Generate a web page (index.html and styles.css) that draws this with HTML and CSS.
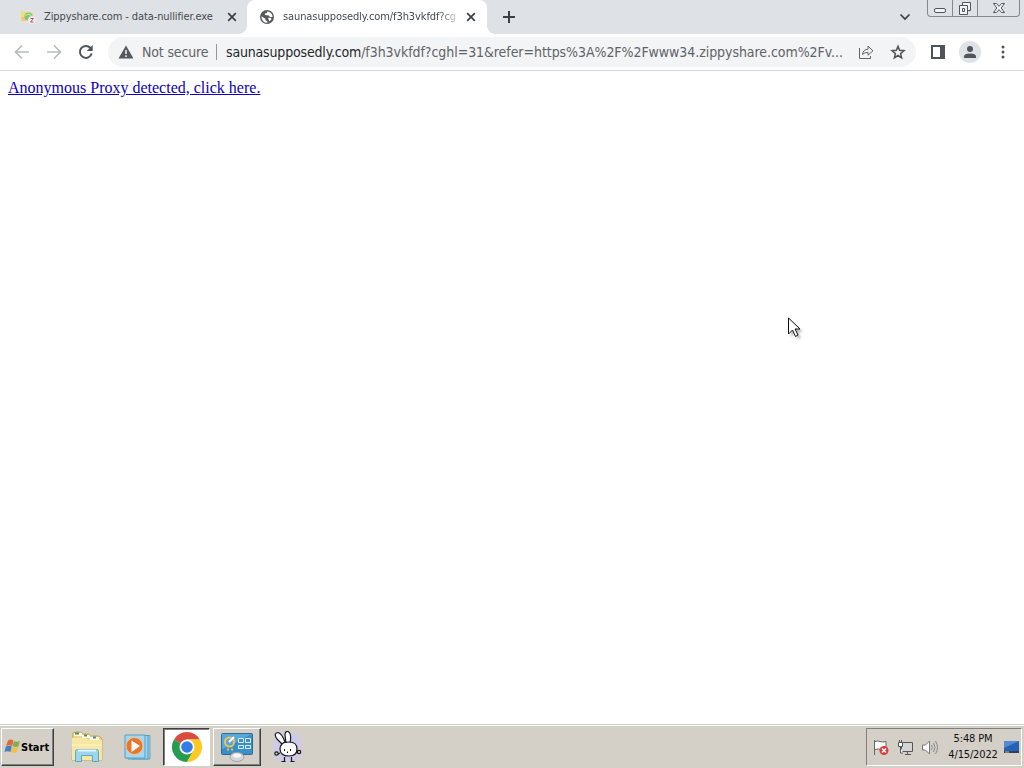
FILE: index.html
```html
<!DOCTYPE html>
<html lang="en">
<head>
    <meta charset="UTF-8">
    <title>saunasupposedly.com</title>
    <link rel="stylesheet" href="styles.css">
</head>
<body>
    <div class="tab-strip">
        <div class="tab">
            <svg class="favicon" width="16" height="16" viewBox="0 0 16 16">
                <path d="M1 2l6 .5 1 1 5-.5v7l-12 2z" fill="#f3de7c"/>
                <path d="M1 8h5v4H2z" fill="#f7c56e"/>
                <circle cx="8.5" cy="7.5" r="4" fill="#7fc777"/>
                <path d="M5.500 6.500q4-3 6 1" stroke="#d6f0bd" fill="none"/>
                <circle cx="11.800" cy="11" r="3.700" fill="#f8eded"/>
                <path d="M10.500 9.500h3l-3 3.500h3" stroke="#a65260" fill="none"/>
            </svg>
            <span class="tab-title">Zippyshare.com - data-nullifier.exe</span>
            <svg class="tab-close" width="10" height="10" viewBox="0 0 10 10"><path d="M1.200 1.200l7.600 7.600M8.800 1.200L1.200 8.800"/></svg>
        </div>
        <div class="tab active">
            <svg class="favicon" width="16" height="16" viewBox="0 0 16 16">
                <circle cx="8" cy="8" r="7" fill="#55595e"/>
                <path d="M2.300 7.200l4.100 2.500v1.500l2 1v1.600Q3 14 2.300 7.200zM8.500 2.300l-.6 1.600-2 .6v1.600l4 .3 1 1.500 2.700.2Q13.700 4 8.500 2.300zM9 8.700h2.500l1.300 1.300-2.500 2.500z" fill="#fff"/>
            </svg>
            <span class="tab-title faded">saunasupposedly.com/f3h3vkfdf?cg</span>
            <svg class="tab-close" width="10" height="10" viewBox="0 0 10 10"><path d="M1.200 1.200l7.600 7.600M8.800 1.200L1.200 8.800"/></svg>
        </div>
        <svg class="new-tab" width="12" height="12" viewBox="0 0 12 12"><path d="M6 0v12M0 6h12"/></svg>
        <svg class="tab-search" width="12" height="8" viewBox="0 0 12 8"><path d="M1.500 1.500L6 6l4.500-4.500"/></svg>
        <div class="window-buttons">
            <div class="win-min"><svg width="14" height="16" viewBox="0 0 14 16"><rect x="1.500" y="8.500" width="11" height="4" rx="1.500"/></svg></div>
            <div class="win-max"><svg width="14" height="16" viewBox="0 0 14 16"><path d="M4.500 5.500v-3h8v8h-3M1.500 5.500h8v9h-8zM4.500 8.500h2v3h-2z"/></svg></div>
            <div class="win-close"><svg width="14" height="16" viewBox="0 0 14 16"><path d="M1.500 3.500h3L7 6.300l2.500-2.800h3L9.200 8l3.300 4.500h-3L7 9.700l-2.500 2.800h-3L4.800 8z"/></svg></div>
        </div>
    </div>

    <div class="toolbar">
        <svg class="nav" width="16" height="16" viewBox="0 0 16 16"><path d="M15 8H2M8 1.500L1.500 8 8 14.500"/></svg>
        <svg class="nav" width="16" height="16" viewBox="0 0 16 16"><path d="M1 8h13M8 1.500L14.500 8 8 14.500"/></svg>
        <svg class="nav reload" width="16" height="16" viewBox="0 0 16 16"><path d="M13.700 9.500A6 6 0 1 1 12.500 4"/><path class="tip" d="M14.700 1v6h-6z"/></svg>
        <div class="address-bar">
            <svg class="warning" width="16" height="14" viewBox="0 0 16 14"><path d="M8 .5L15.500 13.500H.5z" fill="#55595d"/><path d="M8 5v4M8 10.200v1.800" stroke="#f1f3f4" stroke-width="1.500"/></svg>
            <span class="not-secure">Not secure</span>
            <span class="divider"></span>
            <span class="url"><span class="host">saunasupposedly.com</span><span class="path">/f3h3vkfdf?cghl=31&amp;refer=https%3A%2F%2Fwww34.zippyshare.com%2Fv...</span></span>
            <svg class="share" width="16" height="16" viewBox="0 0 16 16"><path d="M1.500 4v10.500h11V12M4.500 10.500Q5 5.500 10 5.200V2.200l5 4.600-5 4.400V8.300Q6.500 8.300 4.500 10.500z"/></svg>
            <svg class="star" width="16" height="16" viewBox="0 0 16 16"><path d="M8 2.300l1.600 4 4.400.4-3.400 2.900 1 4.200L8 11.500l-3.600 2.300 1-4.200L2 6.700l4.400-.4z"/></svg>
        </div>
        <svg class="side-panel" width="14" height="14" viewBox="0 0 14 14"><path d="M0 0h14v14H0zM2 2v10h7V2z" fill="#505458" fill-rule="evenodd"/></svg>
        <svg class="avatar" width="22" height="22" viewBox="0 0 22 22"><circle cx="11" cy="11" r="11" fill="#dfe2e6"/><circle cx="11" cy="8" r="3" fill="#50565b"/><path d="M5 17v-1.500q0-3 6-3t6 3V17z" fill="#50565b"/></svg>
        <svg class="menu" width="4" height="14" viewBox="0 0 4 14"><circle cx="2" cy="2" r="1.500"/><circle cx="2" cy="7" r="1.500"/><circle cx="2" cy="12" r="1.500"/></svg>
    </div>

    <div class="page">
        <a href="#">Anonymous Proxy detected, click here.</a>
    </div>

    <div class="taskbar">
        <div class="start">
            <svg width="17" height="18" viewBox="0 0 17 18">
                <path d="M4 2.500q3-2 5.500 0L8 8Q5 6.500 2 8z" fill="#e3663c"/>
                <path d="M10 3q3 1.500 6 0l-1.700 5.500q-3 1-5.800-.5z" fill="#80b04b"/>
                <path d="M1.800 8.500q3-1.500 6 0L6.500 14Q3.500 12.500.5 14z" fill="#4280c8"/>
                <path d="M8.300 9q3 1.500 6 0l-1.500 5.500q-3 1-6-.5z" fill="#efc145"/>
            </svg>
            <span>Start</span>
        </div>
        <svg class="explorer" width="34" height="34" viewBox="0 0 34 34">
            <path d="M3 3l2-1h6l2 2h6l2 2h8l3 3v21H2z" fill="#edd88a" stroke="#c9a746"/>
            <path d="M4 3h8v3H4zM12 5h8v3h-8zM20 7h9v3h-9z" fill="#fffdf0"/>
            <path d="M5 3.500h4" stroke="#48933f" stroke-width="2"/><path d="M14 5.500h3" stroke="#598c55" stroke-width="2"/><path d="M23 7.500h3" stroke="#557cac" stroke-width="2"/>
            <path d="M2 8h13l3 2h14v20H2z" fill="#f6e8a4"/>
            <path d="M2 15h30" stroke="#fff6c6"/>
            <path d="M5.500 31.500v-10q0-2 2-2h19q2 0 2 2v10h-6v-6h-11v6z" fill="#9dd5ec" stroke="#5ba7ca"/>
            <path d="M8 20.500h18" stroke="#e2f6fc" stroke-width="2"/>
        </svg>
        <svg class="media" width="28" height="28" viewBox="0 0 28 28">
            <path d="M8 3l18-.5V26H8z" fill="#a3cce3" stroke="#6ba5c8"/>
            <path d="M4 2.500h20V26H4z" fill="#a0d4ee" stroke="#4e9ac3"/>
            <path d="M1 2h20v23H1z" fill="#a5d7ee" stroke="#559fc8"/>
            <circle cx="10.500" cy="13" r="8.500" fill="#e8772d" stroke="#f6c489"/>
            <path d="M7.500 7.500l8.500 5.500-8.500 6z" fill="#fff"/>
        </svg>
        <div class="task chrome-task">
            <svg width="32" height="32" viewBox="0 0 32 32">
                <path d="M16 16L3 8.500A15 15 0 0 1 29 8.500H16z" fill="#d94c3e"/>
                <path d="M16 16L3 8.500A15 15 0 0 0 16 31l6.500-11.200z" fill="#279b51"/>
                <path d="M16 8.500h13A15 15 0 0 1 16 31l6.500-11.200z" fill="#fbc91f"/>
                <circle cx="16" cy="16" r="7.500" fill="#fff"/><circle cx="16" cy="16" r="5.800" fill="#327ce3"/>
            </svg>
        </div>
        <div class="task panel-task">
            <svg width="34" height="32" viewBox="0 0 34 32">
                <rect x="1.500" y="2.500" width="31" height="21" rx="1" fill="#3b8fc7" stroke="#2a6b9c"/>
                <path d="M2 3h30L2 18z" fill="#59a8d6"/>
                <circle cx="9.500" cy="11" r="4.500" fill="none" stroke="#edc35e" stroke-width="2"/>
                <path d="M9 11l5-5" stroke="#fff" stroke-width="2"/>
                <path d="M18.500 7.500h5v4h-5zM25.500 7.500h5v4h-5zM18.500 14.500h5v3h-5zM25.500 14.500h5v3h-5z" fill="#458fc4" stroke="#d7effa"/>
                <path d="M7 18.500h2m2 0h2" stroke="#f2bd4f" stroke-width="2"/>
                <ellipse cx="17" cy="26" rx="7" ry="4.500" fill="#d4d7d9" stroke="#9ca3a9"/><ellipse cx="17" cy="24.500" rx="4" ry="2" fill="#f6f6f6"/>
            </svg>
        </div>
        <svg class="bunny" width="32" height="32" viewBox="0 0 32 32">
            <rect class="glow" x="2" y="2" width="27" height="28" rx="9"/>
            <g fill="#fff" stroke="#17171c" stroke-width="1.200">
                <path d="M12.500 26v4M19.500 26v4M9.500 30.500h4M18.500 30.500h4"/>
                <path d="M10 13L5 8Q1 2 6 1.500q4 1 7 9.500zM14 12l-1-8q0-4 3-3.500 4 2 2 11.500z"/>
                <path d="M10 13q2-2 7-2 8 0 8 7 0 7-8 7-9 0-9-7 0-3 2-5z"/>
                <path d="M8 22l-2 1M24 22l2-1" fill="none"/>
                <circle cx="4.500" cy="22.500" r="1.700" fill="#dbdba0"/><circle cx="27" cy="21" r="1.700" fill="#dbdba0"/>
            </g>
            <path d="M12.500 18v2M18.500 18v2M15.500 20.500v1.500" fill="none" stroke="#17171c"/>
        </svg>
        <div class="tray">
            <svg class="flag" width="17" height="17" viewBox="0 0 17 17"><path d="M1.500 1v15M2 2.500q3-1 5 0t6 0v8q-3 1-5 0t-6 0" fill="#fafafa" stroke="#65686b"/><circle cx="11" cy="11.500" r="4.500" fill="#d83e42"/><path d="M9 9.500l4 4m0-4l-4 4" stroke="#fff" stroke-width="1.500"/></svg>
            <svg class="network" width="17" height="17" viewBox="0 0 17 17"><path d="M4.500 3.500h11v9h-11zM8 15.500h6M10.500 13v2" fill="#d5d5d2" stroke="#55585b"/><path d="M1.500 3.500h4v4h-4zM2.500 1v2M4.500 1v2M3.500 8v6H6" fill="#fff" stroke="#55585b"/></svg>
            <svg class="volume" width="17" height="17" viewBox="0 0 17 17"><path d="M1.500 6h3l4-4v13l-4-4h-3z" fill="#fff" stroke="#777"/><path d="M10.500 6q1.500 2.500 0 5M12.500 4q3 4.500 0 9M14.500 2q4 6.500 0 13" fill="none" stroke="#898989"/></svg>
            <div class="clock"><div class="time">5:48 PM</div><div class="date">4/15/2022</div></div>
            <svg class="desktop" width="15" height="14" viewBox="0 0 15 14"><path d="M0 1h15v10H0z" fill="#2462b5"/><path d="M0 1h15L0 8z" fill="#528bd2"/><path d="M0 11h15v2H0z" fill="#323f57"/><path d="M1 12h4" stroke="#a8d2a0"/></svg>
        </div>
    </div>

    <svg class="cursor" width="18" height="25" viewBox="0 0 18 25"><path class="shadow" d="M3 4v16l4-4 3 6 3-1-3-6h5z"/><path d="M.5 1v16l4-4 3 6.500 2.500-1.500-3-6H12z" fill="#fff" stroke="#111"/></svg>
</body>
</html>
```

FILE: styles.css
```css
* {
    box-sizing: border-box;
}

body {
    margin: 0;
    height: 768px;
    display: flex;
    flex-direction: column;
    overflow: hidden;
    background: #fff;
    font-family: "DejaVu Sans Condensed", "DejaVu Sans", sans-serif;
    font-stretch: condensed;
}

svg {
    display: block;
    flex: none;
}

.tab-strip {
    height: 34px;
    flex: none;
    display: flex;
    align-items: flex-start;
    background: #dee1e6;
}

.tab {
    width: 247px;
    height: 34px;
    padding-left: 20px;
    display: flex;
    align-items: center;
    flex: none;
}

.tab.active {
    position: relative;
    width: 240px;
    padding-left: 12px;
    background: #fff;
    border-radius: 8px 8px 0 0;
}

/* curved feet of the active tab */
.tab.active::before,
.tab.active::after {
    content: "";
    position: absolute;
    bottom: 0;
    width: 8px;
    height: 8px;
}

.tab.active::before {
    left: -8px;
    background: radial-gradient(circle at 0 0, transparent 7.5px, #fff 8px);
}

.tab.active::after {
    right: -8px;
    background: radial-gradient(circle at 100% 0, transparent 7.5px, #fff 8px);
}

.tab-title {
    width: 174px;
    margin-left: 8px;
    white-space: nowrap;
    font-size: 11px;
    line-height: 16px;
    letter-spacing: -0.1px;
    color: #45494d;
}

.faded {
    mask-image: linear-gradient(90deg, #000 155px, transparent 180px);
}

.tab-close {
    margin-left: 9px;
}

.tab-close path,
.new-tab path,
.tab-search path {
    fill: none;
    stroke: #3c4043;
    stroke-width: 1.7;
}

.new-tab {
    margin: 11px 0 0 16px;
}

.new-tab path {
    stroke-width: 2;
}

.tab-search {
    margin: 13px 14px 0 auto;
    padding-right: 0;
    position: relative;
}

.window-buttons {
    width: 93px;
    height: 17px;
    margin: 0 4px 0 2px;
    display: flex;
    border: 1px solid #85898f;
    border-top: 0;
    border-radius: 0 0 4px 4px;
}

.window-buttons div {
    display: flex;
    justify-content: center;
    border-right: 1px solid #85898f;
}

.window-buttons svg {
    fill: #f2f3f5;
    stroke: #51565d;
}

.win-min {
    width: 25px;
}

.win-max {
    width: 25px;
}

.window-buttons .win-close {
    flex: 1;
    border: 0;
}

.toolbar {
    height: 37px;
    flex: none;
    padding-left: 14px;
    display: flex;
    align-items: center;
    border-bottom: 1px solid #d7d9dc;
}

.nav {
    margin-right: 16px;
    fill: none;
    stroke: #b9bbbd;
    stroke-width: 1.7;
}

.reload {
    margin-right: 14px;
    stroke: #505458;
    stroke-width: 2;
}

.reload .tip {
    fill: #505458;
    stroke: none;
}

.address-bar {
    width: 808px;
    height: 30px;
    padding-left: 10px;
    display: flex;
    align-items: center;
    border-radius: 15px;
    background: #f3f4f5;
    font-size: 14px;
    color: #5f6368;
    white-space: nowrap;
}

.not-secure {
    width: 67px;
    margin-left: 8px;
    letter-spacing: -0.15px;
}

.divider {
    width: 1px;
    height: 16px;
    margin: 0 9px 0 7px;
    background: #94979b;
}

.url {
    width: 622px;
}

.host {
    color: #24272a;
    letter-spacing: -0.17px;
}

.path {
    letter-spacing: -0.06px;
}

.share {
    margin-left: 10px;
    fill: none;
    stroke: #606468;
}

.star {
    margin-left: 16px;
    fill: none;
    stroke: #505458;
    stroke-width: 1.5;
}

.side-panel {
    margin-left: 15px;
}

.avatar {
    margin-left: 14px;
}

.menu {
    margin-left: 20px;
    fill: #505458;
}

.page {
    flex: 1;
    padding: 8px;
    font: 16px "Liberation Serif", serif;
}

.page a {
    color: #0c00b8;
}

.taskbar {
    height: 44px;
    flex: none;
    display: flex;
    align-items: center;
    padding-top: 1px;
    background: #d4d0c8;
    border-top: 1px solid #d4d0c8;
    box-shadow: inset 0 1px #fff;
}

.start,
.task {
    height: 38px;
    display: flex;
    align-items: center;
    border: 1px solid;
    border-color: #fff #404040 #404040 #fff;
    box-shadow: inset -1px -1px #808080;
}

.start {
    width: 53px;
    margin-left: 1px;
    padding-left: 2px;
    font-size: 11px;
    font-weight: bold;
    color: #000;
}

.explorer {
    margin-left: 16px;
}

.media {
    margin-left: 20px;
}

.task {
    justify-content: center;
}

.chrome-task {
    width: 47px;
    margin-left: 11px;
    background: #fff;
    border-color: #404040 #fff #fff #404040;
    box-shadow: inset 1px 1px #808080;
}

.panel-task {
    width: 48px;
    margin-left: 3px;
}

.bunny {
    margin-left: 11px;
}

.bunny .glow {
    fill: #cdc9ee;
    filter: blur(2px);
}

.tray {
    width: 156px;
    height: 38px;
    margin-left: auto;
    margin-right: 2px;
    padding-left: 6px;
    display: flex;
    align-items: center;
    border: 1px solid;
    border-color: #808080 #fff #fff #808080;
}

.network,
.volume {
    margin-left: 7px;
}

.clock {
    width: 52px;
    margin: 0 5px 0 9px;
    text-align: center;
    font-size: 11px;
    line-height: 16px;
    letter-spacing: -0.15px;
    color: #111;
    white-space: nowrap;
}

.cursor {
    position: absolute;
    left: 788px;
    top: 317px;
}

.cursor .shadow {
    fill: #bbb;
    filter: blur(1px);
}
```
